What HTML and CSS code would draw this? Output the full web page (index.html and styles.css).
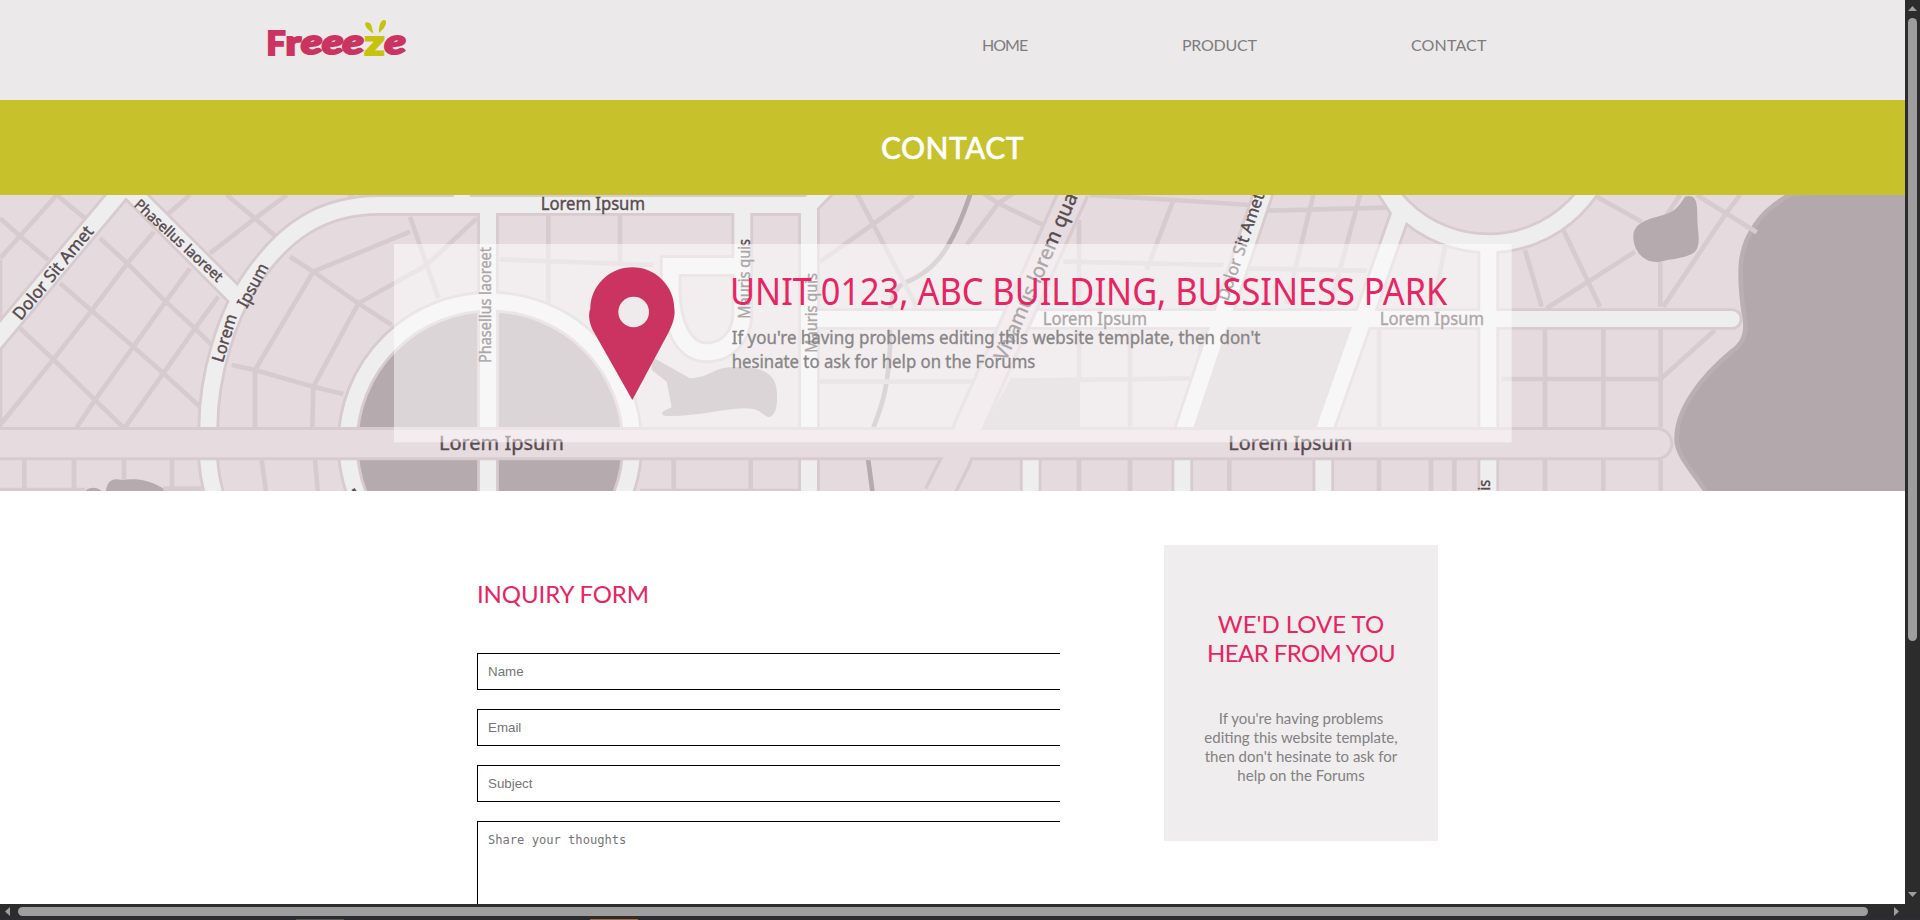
FILE: index.html
```html
<!DOCTYPE html>
<html lang="en">
<head>
<meta charset="utf-8">
<title>Freeeze - Contact</title>
<link rel="stylesheet" href="styles.css">
</head>
<body>
<div class="window">
  <div class="page">
    <header class="header">
      <a class="logo" href="#">
        <svg width="142" height="48" viewBox="266 14 142 48">
          <g class="logo-text">
            <text x="266.500" y="54.500" font-size="32" textLength="19" lengthAdjust="spacingAndGlyphs">F</text>
            <text x="285.500" y="54.500" font-size="34" textLength="15.500" lengthAdjust="spacingAndGlyphs">r</text>
            <g class="logo-slant">
              <text x="301" y="54" font-size="34" textLength="21.500" lengthAdjust="spacingAndGlyphs">e</text>
              <text x="322" y="54" font-size="34" textLength="21.500" lengthAdjust="spacingAndGlyphs">e</text>
              <text x="342.500" y="54" font-size="34" textLength="21.500" lengthAdjust="spacingAndGlyphs">e</text>
              <text x="384.500" y="54" font-size="34" textLength="21.500" lengthAdjust="spacingAndGlyphs">e</text>
            </g>
            <text x="364.500" y="54.500" font-size="34" textLength="20" lengthAdjust="spacingAndGlyphs" class="logo-z">z</text>
          </g>
          <path class="leaf" d="M373.500 33.500C368 30 364.500 26 365.200 23.200C366.500 21.300 370 22 371.200 25C372.200 28 372.800 31 373.500 33.500ZM379 33C378.500 27 380 21.500 383.500 20C386 19.800 386.800 22 385.500 25C384 28.500 381.500 30.500 379 33Z"/>
        </svg>
      </a>
      <nav class="nav">
        <a class="nav-home" href="#">HOME</a>
        <a class="nav-product" href="#">PRODUCT</a>
        <a class="nav-contact" href="#">CONTACT</a>
      </nav>
    </header>
    <div class="banner"><h1>CONTACT</h1></div>
    <svg class="map" width="1905" height="296" viewBox="0 15 5715 888" preserveAspectRatio="none">
      <rect class="land" y="0" width="5715" height="920"/>
      <g class="block">
        <path d="M3605 410H4090L3960 715H3560ZM3030 570H3240V715H2950Z"/>
      </g>
      <g class="water">
        <circle cx="1470" cy="762" r="402"/>
        <path d="M1955 500L2070 565C2140 560 2140 530 2200 532C2270 530 2325 540 2330 600C2335 650 2325 680 2305 682C2280 670 2280 655 2235 655C2160 658 2100 678 2010 678C1980 678 1975 668 2015 652L2000 575L1955 540Z"/>
        <path d="M255 903C270 890 290 890 305 903H318C322 870 340 864 365 870C400 865 450 865 500 903Z"/>
      </g>
      <path class="river" d="M2915 0C2850 200 2790 250 2710 280C2660 310 2670 400 2670 470C2665 580 2650 640 2620 712M2604 805L2618 910"/>
      <g class="lane">
        <path d="M0 85L60 138L145 210M180 280L275 362L400 470L490 550L600 650M300 145L382 220L497 335L585 415L640 470M60 415L160 508L285 630L370 712M170 15L255 85M680 15L765 85L840 150"/>
        <path d="M0 205L60 138L170 15M570 15L500 75M462 125L382 220L275 362L160 508L0 705M570 235L497 335L400 470L285 630L230 712M655 320L585 415L490 550L375 712M860 15L765 85L630 190"/>
        <path d="M870 200L940 245L1075 340L1175 405M1230 125L940 245L765 540V712M1230 80L1315 325M1430 85L1280 225L1075 340L940 590L937 712M695 525L765 540L940 590L1030 612M1045 10L1060 22"/>
        <path d="M73 810V893M222 810V893M372 810V870M516 810V893M0 900H255M490 896H605M785 810L799 910M945 810L954 910M0 210V712"/>
        <path d="M1645 75V340M1860 75V215M1500 208L1960 225M2460 215L2620 102L2740 15M2570 10L2618 100L2750 350M2460 575H2920M2021 810V903M2252 810V903M1920 903H2420"/>
        <path d="M2950 10L2995 40L3130 105M3040 10L2995 40L2900 165M3237 90V570M3390 415V712M3520 30L3440 240M3940 15L3860 340M4080 15L3990 350M3270 15L3520 30L3750 45M3800 62L4180 52M3190 215L3670 225M3730 235L4100 242M3030 572L3570 565M3237 810V903M3390 810V903M3688 810V903M4137 415V712M4137 810V903M4293 810V903"/>
        <path d="M4363 810V903M4575 180L4625 350M4690 120L4800 350M4790 20L4925 95M4640 355L4905 185M4981 215V350M5220 15L5178 70L4990 350M5040 15L4990 90M4335 170L4300 350M4635 415V712M4810 415V712M4982 415V712M4635 810V903M4810 810V903M4982 810V903M4505 567H4982L5145 420"/>
      </g>
      <path class="water" d="M5055 20C5090 10 5092 40 5092 80C5092 130 5105 160 5085 185C5060 205 5020 205 4980 215C4930 222 4900 180 4900 140C4900 100 4940 88 4990 75C5030 65 5045 35 5055 20Z"/>
      <path class="sea" d="M5380 10C5285 55 5223 140 5222 240C5221 320 5231 360 5236 400C5239 440 5225 465 5195 485C5105 560 5025 660 5030 755C5035 800 5075 840 5125 915H5750V0Z"/>
      <path class="lane" d="M5090 15L5178 70L5270 127"/>
      <g class="casing">
        <path d="M-20 460L365 0M390 0L715 325M625 712C625 560 680 370 760 260C850 130 960 45 1140 45H2427L2480 -10M625 812Q628 860 642 910M1464 50V903M2227 60V370C2227 440 2180 487 2120 487C2050 487 2012 400 2012 300V228H2227M2427 50V910M2427 387H5195M3788 15L3555 712M4205 60L3975 712M4160 0L4205 70M4465 170V910M3092 812V910M3547 812V910M3970 812V910"/>
        <circle cx="1470" cy="762" r="427"/><circle cx="4465" cy="-206" r="366"/>
      </g>
      <g class="road">
        <path d="M1385 0V40M-20 460L365 0M390 0L715 325M625 712C625 560 680 370 760 260C850 130 960 45 1140 45H2427L2480 -10M625 812Q628 860 642 910M1464 50V910M2227 60V370C2227 440 2180 487 2120 487C2050 487 2012 400 2012 300V228H2227M2427 50V910M2427 387H5195M3788 15L3555 712M4205 60L3975 712M4160 0L4205 70M4465 170V910M3092 812V910M3547 812V910M3970 812V910"/>
        <circle cx="1470" cy="762" r="427"/><circle cx="4465" cy="-206" r="366"/>
      </g>
      <path class="avenue-casing" d="M3224 0L2905 712L2868 810L2815 915"/>
      <path class="boulevard-casing" d="M-60 761H4970"/>
      <path class="avenue" d="M3224 0L2905 712L2868 810L2815 915"/>
      <path class="boulevard" d="M-60 761H4970"/>
      <g class="label">
        <text transform="translate(62 394) rotate(-50.500)" font-size="52" textLength="348" lengthAdjust="spacingAndGlyphs">Dolor Sit Amet</text>
        <text transform="translate(400 47) rotate(42.500)" font-size="44" textLength="342" lengthAdjust="spacingAndGlyphs">Phasellus laoreet</text>
        <text transform="translate(668 520) rotate(-73)" font-size="50" textLength="148" lengthAdjust="spacingAndGlyphs">Lorem</text>
        <text transform="translate(740 357) rotate(-62)" font-size="50" textLength="142" lengthAdjust="spacingAndGlyphs">Ipsum</text>
        <text x="1622" y="61" font-size="52" textLength="313" lengthAdjust="spacingAndGlyphs">Lorem Ipsum</text>
        <text x="1317" y="779" font-size="60" textLength="375" lengthAdjust="spacingAndGlyphs">Lorem Ipsum</text>
        <text x="3685" y="779" font-size="60" textLength="372" lengthAdjust="spacingAndGlyphs">Lorem Ipsum</text>
        <text x="3128" y="404" font-size="52" textLength="313" lengthAdjust="spacingAndGlyphs">Lorem Ipsum</text>
        <text x="4139" y="404" font-size="52" textLength="313" lengthAdjust="spacingAndGlyphs">Lorem Ipsum</text>
        <text transform="translate(1474 519) rotate(-90)" font-size="46" textLength="348" lengthAdjust="spacingAndGlyphs">Phasellus laoreet</text>
        <text transform="translate(2249 386) rotate(-90)" font-size="46" textLength="239" lengthAdjust="spacingAndGlyphs">Mauris quis</text>
        <text transform="translate(2450 488) rotate(-90)" font-size="46" textLength="239" lengthAdjust="spacingAndGlyphs">Mauris quis</text>
        <text transform="translate(4471 1108) rotate(-90)" font-size="46" textLength="239" lengthAdjust="spacingAndGlyphs">Mauris quis</text>
        <text transform="translate(3018 516) rotate(-66.500)" font-size="60" textLength="598" lengthAdjust="spacingAndGlyphs">Vivamus lorem quam</text>
        <text transform="translate(3683 335) rotate(-71)" font-size="50" textLength="338" lengthAdjust="spacingAndGlyphs">Dolor Sit Amet</text>
        <path d="M1055 900L1064 895L1070 905H1062Z"/>
      </g>
      <rect class="veil" x="1182" y="162" width="3353" height="595"/>
      <path class="pin" d="M1897 630L1782 427C1758 382 1771 357 1771 357C1771 288 1828 232 1897 232C1966 232 2023 288 2023 357C2023 357 2030 382 2006 427Z"/>
      <circle class="pin-hole" cx="1901" cy="366" r="46"/>
      <text class="address" x="2190" y="346" textLength="2152" lengthAdjust="spacingAndGlyphs">UNIT 0123, ABC BUILDING, BUSSINESS PARK</text>
      <g class="note">
        <text x="2195" y="463" textLength="1586" lengthAdjust="spacingAndGlyphs">If you're having problems editing this website template, then don't</text>
        <text x="2195" y="535" textLength="911" lengthAdjust="spacingAndGlyphs">hesinate to ask for help on the Forums</text>
      </g>
    </svg>
    <main class="content">
      <form class="form">
        <h2>INQUIRY FORM</h2>
        <input type="text" placeholder="Name">
        <input type="text" placeholder="Email">
        <input type="text" placeholder="Subject">
        <textarea placeholder="Share your thoughts"></textarea>
      </form>
      <aside class="aside">
        <h2>WE'D LOVE TO<br><span class="hear">HEAR FROM YOU</span></h2>
        <p>If you're having problems<br>editing this website template,<br>then don't hesinate to ask for<br>help on the Forums</p>
      </aside>
    </main>
  </div>
  <svg class="vbar" width="15" height="904">
    <path d="M3 11H12L7.500 6ZM3 892H12L7.500 897Z"/>
    <rect x="3" y="18" width="9" height="623" rx="4.500"/>
  </svg>
  <svg class="hbar" width="1920" height="15">
    <path d="M10 3V12L5 7.500ZM1894 3V12L1899 7.500Z"/>
    <rect x="18" y="3" width="1850" height="9" rx="4.500"/>
  </svg>
  <div class="edge"><span class="edge-grey"></span><span class="edge-orange"></span></div>
</div>
</body>
</html>
```
FILE: styles.css
```css
* { box-sizing: border-box; }
html, body { margin: 0; overflow: hidden; }
body { font-family: Lato, "Liberation Sans", sans-serif; background: #fff; }
.window {
  display: grid;
  width: 1920px;
  height: 920px;
  grid-template-columns: 1905px 15px;
  grid-template-rows: 904px 15px 1px;
  overflow: hidden;
}
.page { height: 904px; overflow: hidden; background: #fff; }
svg { display: block; }

.header { display: flex; height: 100px; background: #ebe9ea; }
.logo { display: block; padding: 14px 0 0 266px; }
.logo-text { font-family: Lato, sans-serif; font-weight: 900; fill: #cb3360; stroke: #cb3360; stroke-width: 2; }
.logo-slant { font-style: italic; }
.logo-text .logo-z { fill: #c7c20d; stroke: #c7c20d; }
.leaf { fill: #c7c20d; }
.nav { display: flex; padding: 35px 0 0 574px; font-size: 16px; line-height: 20px; }
.nav a { color: #7e7c7d; text-decoration: none; white-space: nowrap; }
.nav-home { width: 200px; letter-spacing: -1px; }
.nav-product { width: 229px; letter-spacing: -0.25px; }
.nav-contact { letter-spacing: 0.15px; }

.banner { height: 95px; background: #c7c12c; text-align: center; }
.banner h1 { margin: 0; padding-top: 29px; font-size: 30px; line-height: 36px; font-weight: 500; color: #fff; letter-spacing: 0.4px; -webkit-text-stroke: 0.5px #fff; }

.land { fill: #e5dade; }
.block { fill: #d5cacf; }
.water { fill: #b5aaae; }
.river { fill: none; stroke: #b5aaae; stroke-width: 14; }
.lane { fill: none; stroke: #d7cbd0; stroke-width: 14; }
.sea { fill: #b3a9ac; stroke: #bbafb3; stroke-width: 14; }
.casing { fill: none; stroke: #d7cbd0; stroke-width: 65; stroke-linecap: round; }
.road { fill: none; stroke: #efeeee; stroke-width: 48; stroke-linecap: round; }
.avenue-casing { fill: none; stroke: #d7cbd0; stroke-width: 95; }
.avenue { fill: none; stroke: #e6dbdf; stroke-width: 75; }
.boulevard-casing { stroke: #d7cbd0; stroke-width: 100; stroke-linecap: round; }
.boulevard { stroke: #e6dbdf; stroke-width: 82; stroke-linecap: round; }
.label { fill: #574b50; stroke: #574b50; stroke-width: 1.2; font-family: "Noto Sans", sans-serif; }
.veil { fill: #fff; opacity: .51; }
.pin { fill: #cb3360; }
.pin-hole { fill: #efebed; }
.address { font: 114px "Noto Sans", sans-serif; fill: #e72562; }
.note { font: 53px "Noto Sans", sans-serif; fill: #878586; stroke: #878586; stroke-width: 1; }

.content { display: flex; align-items: flex-start; gap: 104px; padding: 54px 0 0 477px; }
.form { display: flex; flex-direction: column; width: 583px; padding-top: 34px; }
h2 { margin: 0; font-size: 24px; line-height: 29px; font-weight: 400; color: #e72562; }
.form h2 { margin-bottom: 45px; letter-spacing: -0.1px; }
.form input, .form textarea {
  display: block;
  width: 583px;
  border: 1px solid #000;
  border-right: 0;
  border-radius: 0;
  background: #fff;
  outline: 0;
  resize: none;
}
.form input { height: 37px; margin: 0 0 19px; padding: 0 10px; font: 13.333px "Liberation Sans", sans-serif; }
.form textarea { height: 150px; margin: 0; padding: 11px 10px; font: 12.100px "DejaVu Sans Mono", monospace; }
::placeholder { color: #757575; opacity: 1; }
.aside { width: 274px; height: 296px; padding-top: 64px; background: #efedee; text-align: center; }
.hear { letter-spacing: -0.6px; }
.aside p { margin: 42px 0 0; font-size: 15px; line-height: 19px; color: #838182; }

.vbar, .hbar { background: #2c2c2c; fill: #9e9e9e; }
.hbar { grid-column: 1 / 3; }
.edge { grid-column: 1 / 3; display: flex; gap: 246px; padding-left: 296px; background: #292e38; }
.edge-grey { width: 48px; background: #57585c; }
.edge-orange { width: 48px; background: #ad683c; }
```
